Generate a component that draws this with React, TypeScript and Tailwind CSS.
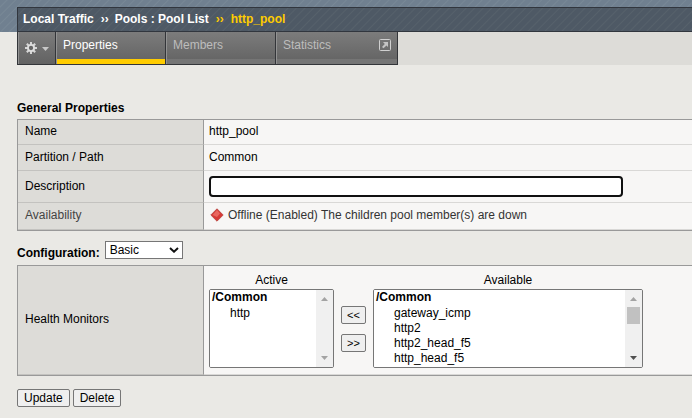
import type { ReactNode } from "react";

type ListProps = {
  id: string;
  title: string;
  options: string[];
  scrollable?: boolean;
  width: string;
};

function MonitorList({ id, title, options, scrollable = false, width }: ListProps) {
  return (
    <div className={`flex flex-col ${width}`}>
      <label htmlFor={id} className="h-[17px] text-center leading-4">
        {title}
      </label>
      <div className="flex h-[79px] overflow-hidden rounded-xs border border-[#767676] bg-white">
        <select
          id={id}
          multiple
          size={5}
          className="min-w-0 flex-1 overflow-y-auto border-0 bg-white p-0 text-black outline-none [scrollbar-width:none]"
        >
          <optgroup label="/Common" className="font-bold">
            {options.map((name) => (
              <option key={name} value={name} className="h-[15px] min-h-0 pt-px pr-0 pb-0 pl-5 font-normal">
                {name}
              </option>
            ))}
          </optgroup>
        </select>
        <div aria-hidden="true" className="flex w-[17px] flex-col items-center bg-[#f0f0f0]">
          <svg width="17" height="17" viewBox="0 0 17 17">
            <path d="M5 11h7L8.5 7z" fill="#a3a3a3" />
          </svg>
          <div className="w-full flex-1 px-0.5">
            {scrollable && <div className="h-[17px] bg-[#c1c1c1]" />}
          </div>
          <svg width="17" height="17" viewBox="0 0 17 17">
            <path d="M5 6h7L8.5 10z" fill={scrollable ? "#505050" : "#a3a3a3"} />
          </svg>
        </div>
      </div>
    </div>
  );
}

function Row({ label, height, children }: { label: ReactNode; height: string; children: ReactNode }) {
  return (
    <tr className={height}>
      <th
        scope="row"
        className="w-[186px] border-r border-b border-r-[#999] border-b-[#c3c2bf] bg-[#dddcd8] pt-0 pr-2 pb-0.5 pl-[7px] text-left font-normal"
      >
        {label}
      </th>
      <td className="border-b border-[#d9d8d6] bg-[#f7f6f5] pt-0 pr-0 pb-0.5 pl-[5px]">{children}</td>
    </tr>
  );
}

const tabClass =
  "flex h-8 items-start border-r border-[#333539] bg-linear-to-b from-[#7c7c7c] to-[#626262] shadow-[inset_1px_0_0_#929292]";
const buttonClass = "rounded-xs border border-[#767676] bg-[#efefef] text-black";
const tableClass = "w-full border-separate border-spacing-0 border-y border-l border-[#999]";

export default function App() {
  return (
    <div className="min-h-screen bg-[#eae9e5] font-['Liberation_Sans',Arial,sans-serif] text-xs text-black">
      <header className="bg-[repeating-linear-gradient(135deg,#708090_0px,#708090_4px,#788896_5px,#708090_6px)] pt-[7px] pl-[17px]">
        <nav
          aria-label="Breadcrumb"
          className="flex h-[25px] items-center border-y border-l border-[#31363e] bg-[repeating-linear-gradient(135deg,#4e5965_0px,#4e5965_4px,#56616b_5px,#4e5965_6px)] pb-px pl-[5px] font-bold whitespace-pre text-white"
        >
          <span>Local Traffic</span>
          <span className="pr-1.5 pl-[7px]">››</span>
          <span>Pools : Pool List</span>
          <span className="pr-[7px] pl-[7px] text-[#fc0]">››</span>
          <span className="text-[#fc0]">http_pool</span>
        </nav>
      </header>

      <div className="pl-[17px]">
        <nav aria-label="Pool sections" className="flex h-[33px] bg-[#dddcd8]">
          <div className="flex border-b border-l border-[#333539]">
            <button type="button" aria-label="Options" className={`${tabClass} w-[38px] gap-1 pt-2.5 pl-[7px]`}>
              <svg width="12" height="12" viewBox="0 0 12 12">
                <g stroke="#d6d6d6" strokeWidth="2">
                  <path d="M6 0v3M6 9v3M0 6h3M9 6h3" />
                  <path d="M1.800 1.800l2 2M8.200 8.200l2 2M1.800 10.200l2-2M8.200 3.800l2-2" />
                </g>
                <circle cx="6" cy="6" r="3.100" fill="#666" stroke="#dedede" strokeWidth="1.900" />
              </svg>
              <svg width="9" height="13" viewBox="0 0 9 13">
                <path d="M1 5h7L4.500 9z" fill="#c8c8c8" />
              </svg>
            </button>
            <a
              href="#properties"
              aria-current="page"
              className={`${tabClass} w-[110px] pt-[5px] pl-px text-white`}
            >
              <span className="h-[27px] flex-1 border-b-5 border-[#fc0] pl-1.5">Properties</span>
            </a>
            <a href="#members" className={`${tabClass} w-[110px] pt-[5px] pl-px text-[#bdbdbd]`}>
              <span className="h-[27px] flex-1 border-b-5 border-[#757575] pl-1.5">Members</span>
            </a>
            <a href="#statistics" className={`${tabClass} w-[122px] pt-[5px] pl-px text-[#bdbdbd]`}>
              <span className="flex h-[27px] flex-1 justify-between border-b-5 border-[#757575] pr-1.5 pl-1.5">
                Statistics
                <svg width="12" height="12" viewBox="0 0 12 12" className="mt-0.5">
                  <rect x="0.5" y="0.5" width="11" height="11" rx="1" fill="none" stroke="#d0d0d0" />
                  <path d="M4 3h5v5L7.500 6.500 4.500 9.200 3 8l2.800-3z" fill="#c4c4c4" />
                </svg>
              </span>
            </a>
          </div>
        </nav>

        <main className="pt-[35px]">
          <h2 className="h-[19px] font-bold leading-4">General Properties</h2>
          <table className={tableClass}>
            <tbody>
              <Row label="Name" height="h-[25px]">
                http_pool
              </Row>
              <Row label="Partition / Path" height="h-[26px]">
                Common
              </Row>
              <Row label={<label htmlFor="description">Description</label>} height="h-8">
                <input
                  id="description"
                  type="text"
                  className="mt-px block h-[21px] w-[414px] rounded-sm border-2 border-[#101010] bg-white px-1 outline-none"
                />
              </Row>
              <Row label={<span className="text-[#444]">Availability</span>} height="h-[27px]">
                <div className="flex items-center gap-1 pl-px text-[#333]">
                  <svg width="14" height="14" viewBox="0 0 14 14">
                    <path d="M7 .8L13.200 7 7 13.200.8 7z" fill="#d63a36" stroke="#b5443f" strokeWidth="0.800" />
                    <path d="M7 2L10 5.500 7 9 2.500 7z" fill="#e8675f" />
                  </svg>
                  Offline (Enabled) The children pool member(s) are down
                </div>
              </Row>
            </tbody>
          </table>

          <div className="flex h-[34px] items-start gap-[5px] pt-2.5">
            <label htmlFor="configuration" className="pt-1 font-bold">
              Configuration:
            </label>
            <div className="grid">
              <select
                id="configuration"
                defaultValue="Basic"
                className="col-start-1 row-start-1 h-[18px] w-[78px] appearance-none border border-[#767676] bg-white pl-1 leading-4"
              >
                <option>Basic</option>
                <option>Advanced</option>
              </select>
              <svg
                width="10"
                height="6"
                viewBox="0 0 10 6"
                className="pointer-events-none col-start-1 row-start-1 mr-1 self-center justify-self-end"
              >
                <path d="M1 1l4 3.700L9 1" fill="none" stroke="#101010" strokeWidth="2" />
              </svg>
            </div>
          </div>

          <table className={tableClass}>
            <tbody>
              <Row label="Health Monitors" height="h-[109px]">
                <div className="flex items-end gap-[7px] pt-0.5">
                  <MonitorList id="active" title="Active" width="w-[125px]" options={["http"]} />
                  <div className="flex h-[79px] flex-col justify-center gap-2.5">
                    <button type="button" aria-label="Make active" className={`${buttonClass} h-[18px] w-[25px] text-[11px] leading-3`}>
                      &lt;&lt;
                    </button>
                    <button type="button" aria-label="Make available" className={`${buttonClass} h-[18px] w-[25px] text-[11px] leading-3`}>
                      &gt;&gt;
                    </button>
                  </div>
                  <MonitorList
                    id="available"
                    title="Available"
                    width="w-[270px]"
                    scrollable
                    options={["gateway_icmp", "http2", "http2_head_f5", "http_head_f5", "https", "https_443", "https_head_f5", "inband", "tcp", "tcp_half_open", "udp"]}
                  />
                </div>
              </Row>
            </tbody>
          </table>

          <div className="flex gap-[3px] pt-[13px] pb-2.5">
            <button type="button" className={`${buttonClass} h-[18px] px-1.5 leading-4`}>
              Update
            </button>
            <button type="button" className={`${buttonClass} h-[18px] px-1.5 leading-4`}>
              Delete
            </button>
          </div>
        </main>
      </div>
    </div>
  );
}
